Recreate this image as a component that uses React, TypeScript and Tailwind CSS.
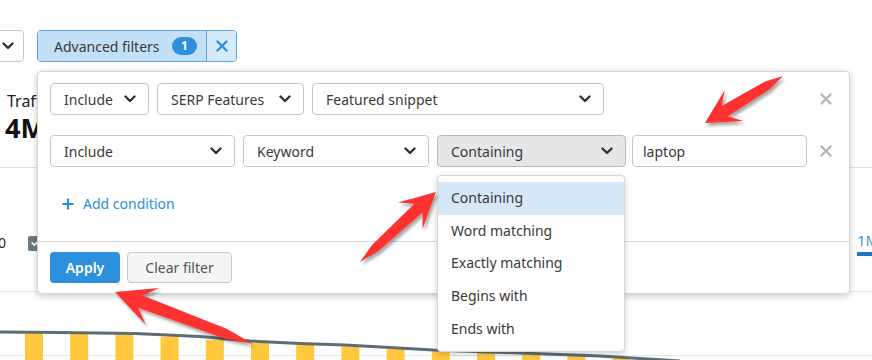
import React from "react";

const Chevron = () => (
  <svg width="12" height="8" viewBox="0 0 12 8" className="shrink-0 text-[#333]">
    <path d="M1.5 1.5 L6 6 L10.5 1.5" fill="none" stroke="currentColor" strokeWidth="2.4" strokeLinecap="round" strokeLinejoin="round" />
  </svg>
);

const XIcon = ({ className }: { className?: string }) => (
  <svg width="12" height="12" viewBox="0 0 12 12" className={className}>
    <path d="M1.5 1.5 L10.5 10.5 M10.5 1.5 L1.5 10.5" fill="none" stroke="currentColor" strokeWidth="2.4" strokeLinecap="round" />
  </svg>
);

function Select({ label, className }: { label: string; className: string }) {
  return (
    <div className={`flex items-center justify-between h-[32px] pl-[13px] pr-[12px] border rounded-[4px] text-[14px] text-[#3a3a3a] ${className}`}>
      <span className="whitespace-nowrap">{label}</span>
      <Chevron />
    </div>
  );
}

function arrowPoints(tx: number, ty: number, ex: number, ey: number, L: number, W: number, w: number) {
  const len = Math.hypot(ex - tx, ey - ty);
  const dx = (ex - tx) / len;
  const dy = (ey - ty) / len;
  const nx = -dy;
  const ny = dx;
  const p = (a: number, b: number) => [tx + dx * a + nx * b, ty + dy * a + ny * b];
  const pts = [
    p(0, 0),
    p(L, W),
    p(L * 0.68, w),
    p(len * 0.8, w * 0.75),
    [ex, ey],
    p(len * 0.8, -w * 0.75),
    p(L * 0.68, -w),
    p(L, -W),
  ];
  return pts.map((q) => q.map((v) => v.toFixed(1)).join(",")).join(" ");
}

const lineY = (x: number) => {
  const pts: [number, number][] = [
    [0, 332], [135, 333.5], [250, 341], [345, 345], [433, 350], [520, 353], [600, 356], [680, 361], [872, 372],
  ];
  for (let i = 0; i < pts.length - 1; i++) {
    const [x0, y0] = pts[i];
    const [x1, y1] = pts[i + 1];
    if (x >= x0 && x <= x1) return y0 + ((y1 - y0) * (x - x0)) / (x1 - x0);
  }
  return 372;
};

function Chart() {
  const bars = Array.from({ length: 14 }, (_, i) => 25 + i * 45.2);
  return (
    <svg width="872" height="68" viewBox="0 292 872 68" className="block">
      <line x1="0" y1="355.5" x2="872" y2="355.5" stroke="#e4e6e7" strokeWidth="1" />
      {bars.map((x, i) => {
        const top = lineY(x + 9) + 1;
        return <rect key={i} x={x} y={top} width="18" height={Math.max(0, 370 - top)} fill="#ffc83d" />;
      })}
      <polyline
        points="0,332 60,332.5 135,333.5 200,336.5 250,341 300,343.5 345,345 390,347.5 433,350 520,353 600,356 680,361"
        fill="none"
        stroke="#5d6d74"
        strokeWidth="3"
        strokeLinejoin="round"
      />
    </svg>
  );
}

export default function App() {
  return (
    <div className="relative w-[872px] h-[360px] overflow-hidden bg-white font-[Noto_Sans,Open_Sans,sans-serif] text-[#333]">
      {/* Background page */}
      <div className="flex flex-col">
        {/* toolbar */}
        <div className="h-[62px] pt-[30px] flex items-start gap-[13px]">
          <div className="-ml-[40px] w-[64px] h-[32px] border border-[#c4c8cb] rounded-[4px] bg-white flex items-center justify-end pr-[9px]">
            <Chevron />
          </div>
          <div className="flex w-[200px] h-[32px] border border-[#5ba4df] rounded-[4px] overflow-hidden">
            <div className="flex-1 flex items-center pl-[16px] pr-[9px] bg-[#c3e0f6]">
              <span className="text-[14px] text-[#3a3a3a] whitespace-nowrap">Advanced filters</span>
              <span className="ml-auto w-[25px] h-[18px] rounded-full bg-[#2d8fde] text-white text-[12px] font-bold flex items-center justify-center leading-none">1</span>
            </div>
            <div className="w-[30px] border-l border-[#5ba4df] bg-[#d6ebfa] flex items-center justify-center">
              <XIcon className="text-[#2d8fde]" />
            </div>
          </div>
        </div>
        {/* metrics */}
        <div className="h-[106px] border-b border-[#dfe1e2] pt-[29px]">
          <div className="w-[37px] overflow-hidden pl-[7px]">
            <div className="text-[16px] leading-[20px] text-[#222] whitespace-nowrap">Traffic</div>
            <div className="text-[27px] leading-[30px] font-bold text-[#111] -ml-[2px] mt-[2px] whitespace-nowrap">4M</div>
          </div>
        </div>
        {/* row C */}
        <div className="h-[124px] border-b border-[#e4e6e7] flex items-start">
          <div className="mt-[65px] w-[37px] overflow-hidden flex items-center">
            <span className="text-[14px] leading-[20px] -ml-[2px] text-[#222]">0</span>
            <span className="ml-[22px] shrink-0 w-[15px] h-[15px] rounded-[2px] bg-[#6b7a81] flex items-center justify-center">
              <svg width="9" height="8" viewBox="0 0 9 8">
                <path d="M1.2 4 L3.5 6.2 L7.8 1.5" fill="none" stroke="white" strokeWidth="1.8" strokeLinecap="round" strokeLinejoin="round" />
              </svg>
            </span>
          </div>
          <div className="ml-auto w-[15px] overflow-hidden mt-[62px] flex flex-col">
            <span className="text-[15px] leading-[20px] text-[#3d9ae2] whitespace-nowrap">1M</span>
            <span className="mt-[2px] h-[4px] bg-[#1f74c6]" />
          </div>
        </div>
        <Chart />
      </div>

      {/* Advanced filters panel */}
      <div className="absolute left-[37px] top-[71px] w-[813px] h-[223px] bg-white border border-[#d3d5d6] rounded-[4px] shadow-[0_2px_7px_rgba(0,0,0,0.22)] flex flex-col">
        <div className="px-[12px] pt-[11px]">
          <div className="flex items-center">
            <Select label="Include" className="w-[99px] border-[#c4c8cb] bg-white" />
            <Select label="SERP Features" className="ml-[8px] w-[147px] border-[#c4c8cb] bg-white" />
            <Select label="Featured snippet" className="ml-[8px] w-[292px] border-[#c4c8cb] bg-white" />
            <div className="ml-auto mr-[5px]">
              <XIcon className="text-[#b5b8ba]" />
            </div>
          </div>
          <div className="flex items-center mt-[20px]">
            <Select label="Include" className="w-[185px] border-[#c4c8cb] bg-white" />
            <Select label="Keyword" className="ml-[8px] w-[186px] border-[#c4c8cb] bg-white" />
            <Select label="Containing" className="ml-[8px] w-[189px] border-[#b4b9bc] bg-[#e6e7e8]" />
            <div className="ml-[6px] w-[175px] h-[32px] border border-[#c4c8cb] rounded-[4px] pl-[10px] flex items-center text-[14px] text-[#3a3a3a]">
              laptop
            </div>
            <div className="ml-auto mr-[5px]">
              <XIcon className="text-[#b5b8ba]" />
            </div>
          </div>
          <div className="mt-[27px] h-[20px] flex items-center pl-[12px] text-[#2d8fde]">
            <svg width="12" height="12" viewBox="0 0 12 12">
              <path d="M6 0.5 V11.5 M0.5 6 H11.5" fill="none" stroke="currentColor" strokeWidth="2.2" />
            </svg>
            <span className="ml-[9px] text-[14px] leading-[20px]">Add condition</span>
          </div>
        </div>
        <div className="flex-1" />
        <div className="border-t border-[#d6d8d9] px-[12px] pt-[10px] pb-[10px] flex items-center gap-[7px]">
          <div className="w-[70px] h-[31px] rounded-[4px] bg-[#2d90de] text-white text-[14px] font-semibold flex items-center justify-center">
            Apply
          </div>
          <div className="w-[105px] h-[31px] rounded-[4px] bg-[#f4f5f5] border border-[#c6cacc] text-[#555] text-[14px] flex items-center justify-center">
            Clear filter
          </div>
        </div>
      </div>

      {/* Dropdown menu */}
      <div className="absolute left-[437px] top-[175px] w-[188px] h-[177px] bg-white border border-[#d4d6d7] rounded-[4px] shadow-[0_2px_6px_rgba(0,0,0,0.18)] pt-[6px] flex flex-col">
        {["Containing", "Word matching", "Exactly matching", "Begins with", "Ends with"].map((t, i) => (
          <div
            key={t}
            className={`h-[32.6px] pl-[13px] pb-[1px] flex items-center text-[14px] text-[#3a3a3a] whitespace-nowrap ${i === 0 ? "bg-[#d4e8f7]" : ""}`}
          >
            {t}
          </div>
        ))}
      </div>

      {/* Red annotation arrows */}
      <svg className="absolute left-0 top-0 pointer-events-none" width="872" height="360" viewBox="0 0 872 360">
        <defs>
          <filter id="ash" x="-20%" y="-20%" width="140%" height="140%">
            <feDropShadow dx="2" dy="3" stdDeviation="1.6" floodColor="#000" floodOpacity="0.35" />
          </filter>
        </defs>
        <g filter="url(#ash)" fill="#ff3131">
          <polygon points={arrowPoints(705, 123, 783, 76, 34, 18, 6)} />
          <polygon points={arrowPoints(436, 192, 360, 262, 35, 18, 6)} />
          <polygon points={arrowPoints(115, 292, 253, 344, 40, 19.5, 6.5)} />
        </g>
      </svg>
    </div>
  );
}
